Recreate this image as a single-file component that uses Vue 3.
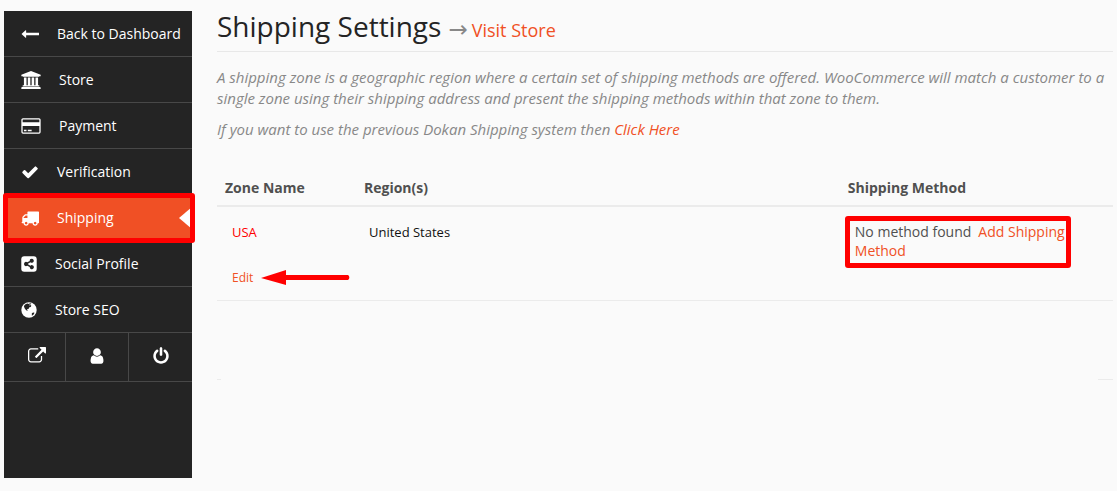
<script setup>
const menu = [
  { label: 'Back to Dashboard', w: 1792, size: 'mid', d: 'M1792 800v192q0 14-9 23t-23 9h-1248v224q0 21-19 29t-35-5l-384-350q-10-10-10-23 0-14 10-24l384-354q16-14 35-6 19 9 19 29v224h1248q14 0 23 9t9 23z' },
  { label: 'Store', w: 1920, size: 'wide', d: 'M960 0l960 384v128h-128q0 26-20.5 45t-48.5 19h-1526q-28 0-48.5-19t-20.5-45h-128v-128zm-704 640h256v768h128v-768h256v768h128v-768h256v768h128v-768h256v768h59q28 0 48.5 19t20.5 45v64h-1664v-64q0-26 20.5-45t48.5-19h59v-768zm1595 960q28 0 48.5 19t20.5 45v128h-1920v-128q0-26 20.5-45t48.5-19h1782z' },
  { label: 'Payment', w: 1920, size: 'wide', d: 'M1760 128q66 0 113 47t47 113v1216q0 66-47 113t-113 47h-1600q-66 0-113-47t-47-113v-1216q0-66 47-113t113-47h1600zm-1600 128q-13 0-22.5 9.5t-9.5 22.5v224h1664v-224q0-13-9.5-22.5t-22.5-9.5h-1600zm1600 1280q13 0 22.5-9.5t9.5-22.5v-608h-1664v608q0 13 9.5 22.5t22.5 9.5h1600zm-1504-128v-128h256v128h-256zm384 0v-128h384v128h-384z' },
  { label: 'Verification', w: 1792, size: 'mid', d: 'M1671 566q0 40-28 68l-724 724-136 136q-28 28-68 28t-68-28l-136-136-362-362q-28-28-28-68t28-68l136-136q28-28 68-28t68 28l294 295 656-657q28-28 68-28t68 28l136 136q28 28 28 68z' },
  { label: 'Shipping', w: 1792, size: 'mid', active: true, d: 'M640 1408q0-52-38-90t-90-38-90 38-38 90 38 90 90 38 90-38 38-90zm-384-512h384v-256h-158q-13 0-22 9l-195 195q-9 9-9 22v30zm1280 512q0-52-38-90t-90-38-90 38-38 90 38 90 90 38 90-38 38-90zm256-1088v1024q0 15-4 26.5t-13.5 18.5-16.5 11.5-23.5 6-22.5 2-25.5 0-22.5-.5q0 106-75 181t-181 75-181-75-75-181h-384q0 106-75 181t-181 75-181-75-75-181h-64q-3 0-22.5.5t-25.5 0-22.5-2-23.5-6-16.5-11.5-13.5-18.5-4-26.5q0-26 19-45t45-19v-320q0-8-.5-35t0-38 2.5-34.5 6.5-37 14-30.5 22.5-30l198-198q19-19 50.5-32t58.5-13h160v-192q0-26 19-45t45-19h1024q26 0 45 19t19 45z' },
  { label: 'Social Profile', w: 1536, size: 'slim', d: 'M288 128h960a288 288 0 0 1 288 288v960a288 288 0 0 1-288 288h-960a288 288 0 0 1-288-288v-960a288 288 0 0 1 288-288z', cut: 'M1050 370a205 205 0 0 0-204 230l-250 130a205 205 0 1 0 0 332l250 130a205 205 0 1 0 64-130l-246-130v-72l246-130a205 205 0 1 0 140-360z' },
  { label: 'Store SEO', w: 1536, size: 'slim', d: 'M768 128a768 768 0 1 1 0 1536a768 768 0 1 1 0-1536z', cut: 'M330 400l130-100 180-60 90 50 150-60 130 50-90 60-110 20-30 90 130-50 90 70-60 120-140 40-60 130-150 60-20 100 110 70-90 10-150-120-110-170-70-190zM1050 1230l130-80 140 20-110 190-160 100z' }
]
const tools = [
  { label: 'Open store', d: 'M1408 928v320q0 119-84.5 203.5t-203.5 84.5h-832q-119 0-203.5-84.5t-84.5-203.5v-832q0-119 84.5-203.5t203.5-84.5h704q14 0 23 9t9 23v64q0 14-9 23t-23 9h-704q-66 0-113 47t-47 113v832q0 66 47 113t113 47h832q66 0 113-47t47-113v-320q0-14 9-23t23-9h64q14 0 23 9t9 23zm384-864v512q0 26-19 45t-45 19-45-19l-176-176-652 652q-10 10-23 10t-23-10l-114-114q-10-10-10-23t10-23l652-652-176-176q-19-19-19-45t19-45 45-19h512q26 0 45 19t19 45z' },
  { label: 'Account', d: 'M1536 1399q0 109-62.5 187t-150.5 78h-854q-88 0-150.5-78t-62.5-187q0-85 8.5-160.5t31.5-152 58.5-131 94-89 134.5-34.5q131 128 313 128t313-128q76 0 134.5 34.5t94 89 58.5 131 31.5 152 8.5 160.5zm-256-887q0 159-112.5 271.5t-271.5 112.5-271.5-112.5-112.5-271.5 112.5-271.5 271.5-112.5 271.5 112.5 112.5 271.5z' },
  { label: 'Log out', d: 'M1664 896q0 156-61 298t-164 245-245 164-298 61-298-61-245-164-164-245-61-298q0-182 80.5-343t226.5-270q43-32 95.5-25t83.5 50q32 42 24.5 94.5t-49.5 84.5q-98 74-151.5 181t-53.5 228q0 104 40.5 198.5t109.5 163.5 163.5 109.5 198.5 40.5 198.5-40.5 163.5-109.5 109.5-163.5 40.5-198.5q0-121-53.5-228t-151.5-181q-42-32-49.5-84.5t24.5-94.5q31-43 84-50t95 25q146 109 226.5 270t80.5 343zm-640-768v640q0 52-38 90t-90 38-90-38-38-90v-640q0-52 38-90t90-38 90 38 38 90z' }
]
</script>

<template>
  <div class="page">
    <nav class="sidebar">
      <a v-for="m in menu" :key="m.label" href="#" class="item" :class="{ active: m.active }">
        <svg :class="m.size" :viewBox="`0 0 ${m.w} 1792`" aria-hidden="true">
          <path :d="m.d" />
          <path v-if="m.cut" class="cut" :d="m.cut" />
        </svg>
        <span>{{ m.label }}</span>
      </a>
      <div class="tools">
        <a v-for="t in tools" :key="t.label" href="#" :aria-label="t.label">
          <svg class="mid" viewBox="0 0 1792 1792" aria-hidden="true"><path :d="t.d" /></svg>
        </a>
      </div>
    </nav>

    <main>
      <header>
        <h1>Shipping Settings</h1>
        <span class="arrow">→</span>
        <a href="#" class="visit">Visit Store</a>
      </header>

      <div class="help">
        <p>A shipping zone is a geographic region where a certain set of shipping methods are offered. WooCommerce will match a customer to a single zone using their shipping address and present the shipping methods within that zone to them.</p>
        <p>If you want to use the previous Dokan Shipping system then <a href="#">Click Here</a></p>
      </div>

      <table>
        <colgroup><col class="c-zone"><col class="c-region"><col></colgroup>
        <thead>
          <tr><th>Zone Name</th><th>Region(s)</th><th>Shipping Method</th></tr>
        </thead>
        <tbody>
          <tr>
            <td class="zone">
              <div class="name">USA</div>
              <div class="edit">
                <a href="#">Edit</a>
                <svg class="pointer" viewBox="0 0 90 16" aria-hidden="true">
                  <path d="M0 8L25 0V5H87a3 3 0 0 1 0 5H25V15z" />
                </svg>
              </div>
            </td>
            <td class="region">United States</td>
            <td class="method">
              <div class="marked"><span>No method found</span><a href="#" class="add">Add Shipping Method</a></div>
            </td>
          </tr>
        </tbody>
      </table>
      <div class="foot"></div>
    </main>
  </div>
</template>

<style>
body { background: #fafafa; }
</style>

<style scoped>
.page {
  box-sizing: border-box;
  display: flex;
  gap: 25px;
  min-height: 100vh;
  padding: 11px 4px 13px;
  font-family: "Open Sans", "Noto Sans", sans-serif;
  font-size: 14px;
  color: #505050;
}
a { color: #f05025; text-decoration: none; }
.sidebar { flex: 0 0 188px; background: #242424; }
.item {
  position: relative;
  box-sizing: border-box;
  display: flex;
  align-items: center;
  gap: 18px;
  height: 46px;
  padding-left: 17px;
  border-bottom: 1px solid #484848;
  color: #fff;
  white-space: nowrap;
}
svg { display: block; flex: none; fill: #fff; height: 18px; }
.wide { width: 20px; }
.mid { width: 18px; }
.slim { width: 16px; }
.cut { fill: #242424; }
.active { background: #f05025; }
.active::before {
  content: "";
  position: absolute;
  right: 0;
  top: 12px;
  border: 11px solid transparent;
  border-left-width: 0;
  border-right: 13px solid #fff;
}
.active::after {
  content: "";
  position: absolute;
  inset: -2px -3px -3px -1px;
  border: 5px solid #f00;
  border-radius: 3px;
}
.tools { display: grid; grid-template-columns: 61px 63px 1fr; border-bottom: 1px solid #484848; }
.tools a { display: flex; justify-content: center; align-items: center; height: 48px; padding: 0 0 2px 4px; box-sizing: border-box; }
.tools a + a { border-left: 1px solid #484848; padding-left: 0; }
main { flex: 1; min-width: 0; }
header {
  display: flex;
  align-items: baseline;
  height: 40px;
  border-bottom: 1px solid #e8e8e8;
}
h1 { margin: 0; font-size: 28px; line-height: 30px; font-weight: 400; color: #242424; }
.arrow { margin: 0 4px 0 7px; font-family: "DejaVu Sans", sans-serif; font-size: 23px; line-height: 24px; color: #888; }
.visit { font-size: 18px; line-height: 24px; }
.help { padding-top: 15px; color: #888; font-size: 15px; font-style: italic; line-height: 21px; }
.help p { margin: 0 0 10px; }
table { width: 100%; margin-top: 30px; border-collapse: collapse; table-layout: fixed; }
.c-zone { width: 139px; }
.c-region { width: 54%; }
th { padding: 8px 8px 7px; text-align: left; font-weight: 700; line-height: 20px; border-bottom: 2px solid #ebebeb; }
td { padding: 9px 15px; vertical-align: top; border-bottom: 1px solid #ebebeb; }
.zone, .region { padding-top: 15px; font-size: 13px; line-height: 20px; }
.region { padding-left: 13px; color: #111; }
.name { color: #f00; }
.edit { display: flex; align-items: center; gap: 8px; margin-top: 26px; padding-bottom: 3px; font-size: 12px; }
.pointer { width: 90px; height: 16px; fill: #f00; }
.marked {
  box-sizing: border-box;
  margin: 0 27px 0 -10px;
  padding: 1px 0 3px 5px;
  border: 5px solid #f00;
  border-radius: 3px;
  line-height: 19px;
}
.add { margin-left: 7px; }
.foot {
  display: flex;
  justify-content: space-between;
  margin-top: 78px;
}
.foot::before, .foot::after { content: ""; width: 4px; height: 1px; background: #ebebeb; }
.foot::after { width: 15px; }
</style>
